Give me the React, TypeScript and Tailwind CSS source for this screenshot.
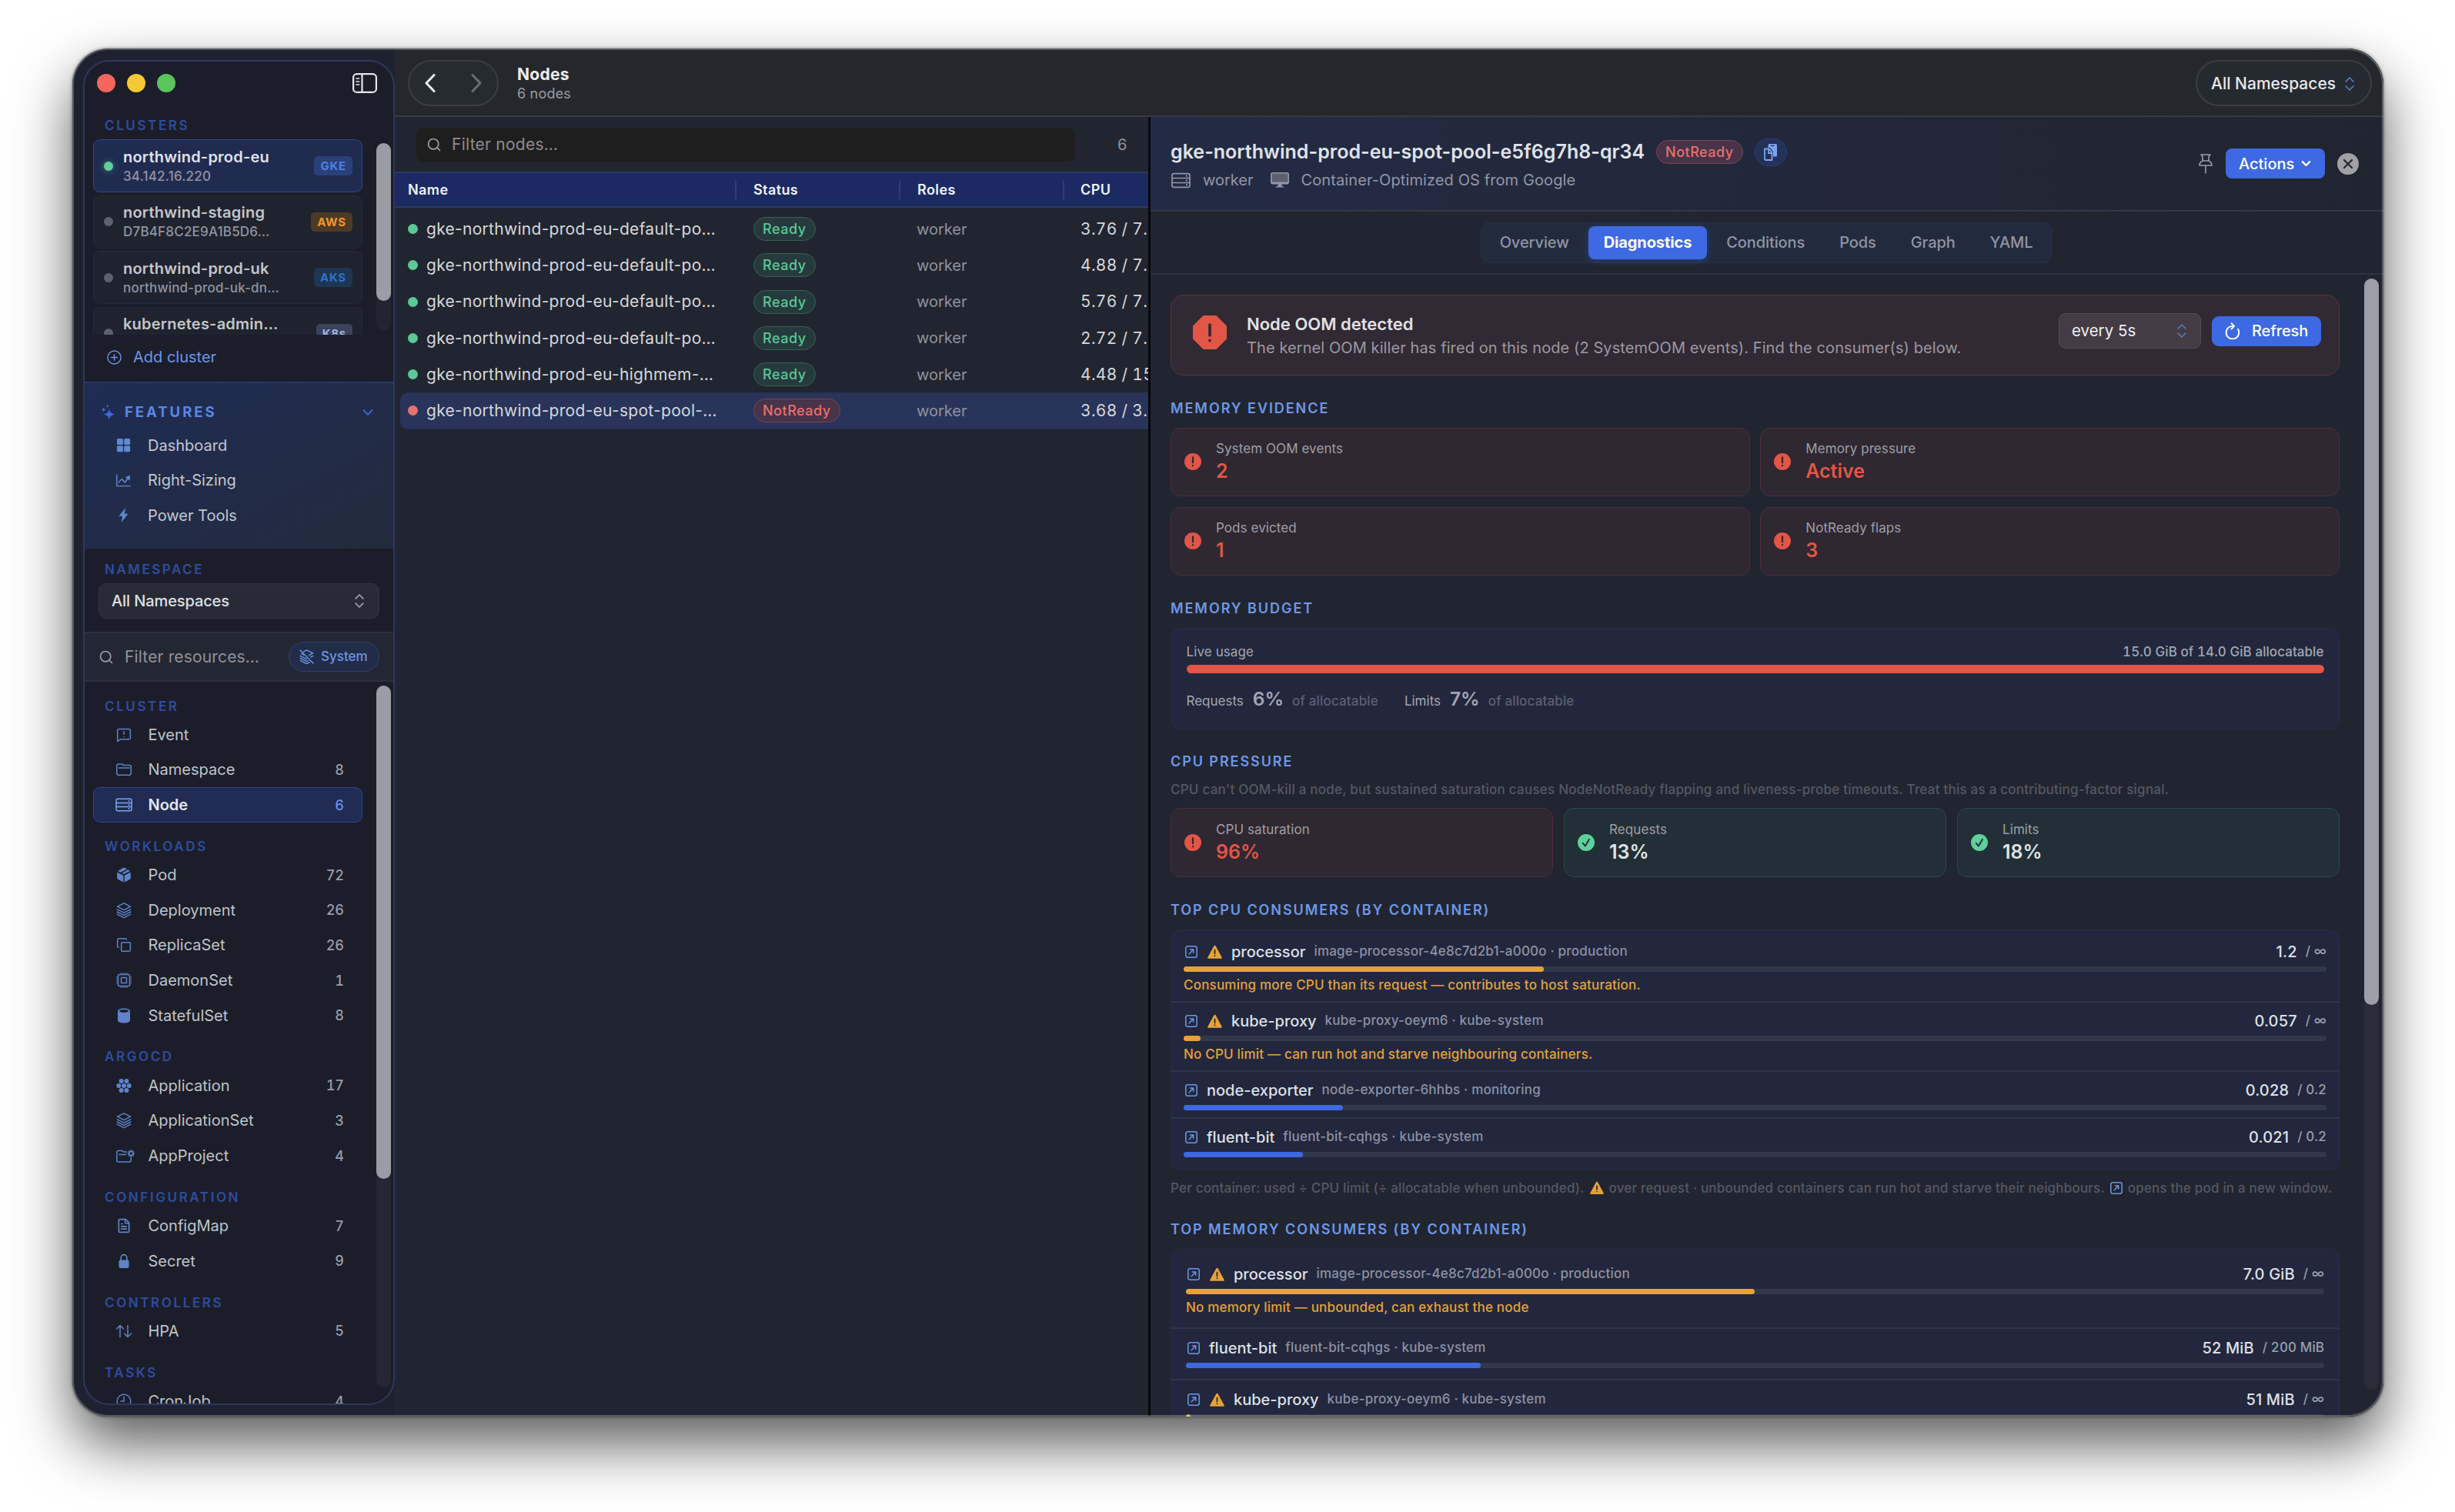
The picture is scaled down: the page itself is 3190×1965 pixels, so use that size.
import React from 'react';
import { ChevronDown, Copy, FileText, MessageSquareWarning, Search } from 'lucide-react';

type IconProps = { className?: string };

function Svg({ className = "", children }: { className?: string; children: React.ReactNode }) {
  return (
    <svg viewBox="0 0 20 20" className={`shrink-0 overflow-visible ${className}`} fill="none" stroke="currentColor" strokeWidth="1.5" strokeLinecap="round" strokeLinejoin="round">
      {children}
    </svg>
  );
}

const SidebarIcon = ({ className }: IconProps) => (
  <svg viewBox="0 0 32 26" className={className} fill="none" stroke="currentColor" strokeWidth="2.2" strokeLinecap="round">
    <rect x="1.1" y="1.1" width="29.8" height="23.8" rx="4.5" />
    <path d="M12.5 1.5v23" />
    <path d="M5 7h3.6M5 11h3.6M5 15h3.6" strokeWidth="1.6" />
  </svg>
);

const FolderIcon = ({ className }: IconProps) => (
  <Svg className={className}>
    <path d="M.8 5v10.2a2 2 0 0 0 2 2h14.4a2 2 0 0 0 2-2V6.600a2 2 0 0 0-2-2H9.500L7.800 3H2.800a2 2 0 0 0-2 2ZM3.500 8h13.500" />
  </Svg>
);

const ServerIcon = ({ className }: IconProps) => (
  <Svg className={className}>
    <rect x="0" y="2.300" width="20" height="15.400" rx="2" />
    <path d="M0 7.400h20M0 12.600h20" />
    <path d="M16.500 4.900h.01M16.500 10h.01M16.500 15.100h.01" strokeWidth="2" />
  </Svg>
);

const CubeIcon = ({ className }: IconProps) => (
  <Svg className={className}>
    <g fill="currentColor" stroke="none">
      <path d="M1.200 6.600 9.300 10.700v8.900L2.200 15.800a2 2 0 0 1-1-1.700ZM18.800 6.600 10.700 10.700v8.900l7.100-3.800a2 2 0 0 0 1-1.700Z" />
      <path d="M10.900.8 14 2.400 5.700 6.800 2 5.100 9.100.8a2 2 0 0 1 1.800 0ZM15.500 3.200 18 4.900l-8 4.200-2.700-1.400Z" />
    </g>
  </Svg>
);

const LayersIcon = ({ className }: IconProps) => (
  <Svg className={className}>
    <path d="M10 .8 18.500 5.200 10 9.600 1.500 5.200Z" />
    <path d="M1.200 8.800 10 13.200l8.800-4.400M1.200 12 10 16.400l8.800-4.400M1.200 15.200 10 19.600l8.800-4.400" strokeWidth="1.400" />
  </Svg>
);

const LayersOffIcon = ({ className }: IconProps) => (
  <Svg className={className}>
    <path d="M5.500 3.200 10 .8l8.500 4.400L13 8M1.200 8.800 10 13.200M15.500 10.500l3.300-1.700M1.200 12 10 16.400l2-1M1.200 15.200 10 19.600l4-2M3 6l3 1.600" />
    <path d="M1 1l18 18" />
  </Svg>
);

const CpuIcon = ({ className }: IconProps) => (
  <Svg className={className}>
    <rect x="2.500" y="2.500" width="15" height="15" rx="2" />
    <rect x="6.500" y="6.500" width="7" height="7" rx=".5" />
    <path d="M6 .5v2M8.700.5v2M11.300.5v2M14 .5v2M6 17.500v2M8.700 17.500v2M11.300 17.500v2M14 17.500v2M.5 6h2M.5 8.700h2M.5 11.300h2M.5 14h2M17.500 6h2M17.500 8.700h2M17.500 11.300h2M17.500 14h2" strokeWidth="1.100" />
  </Svg>
);

const CylinderIcon = ({ className }: IconProps) => (
  <Svg className={className}>
    <path d="M2 4C2 2 5.600.5 10 .5S18 2 18 4v12c0 2-3.600 3.500-8 3.500S2 18 2 16Z" fill="currentColor" stroke="none" />
    <ellipse cx="10" cy="3.900" rx="6" ry="1.900" fill="#1b1e29" stroke="none" />
  </Svg>
);

const HexDotsIcon = ({ className }: IconProps) => (
  <Svg className={className}>
    <g fill="currentColor" stroke="none">
      <circle cx="6.600" cy="3.900" r="3" />
      <circle cx="13.400" cy="3.900" r="3" />
      <circle cx="3.300" cy="10" r="3" />
      <circle cx="10" cy="10" r="3" />
      <circle cx="16.700" cy="10" r="3" />
      <circle cx="6.600" cy="16.100" r="3" />
      <circle cx="13.400" cy="16.100" r="3" />
    </g>
  </Svg>
);

const FolderGearIcon = ({ className }: IconProps) => (
  <Svg className={className}>
    <path d="M13.500 5H9.500L7.800 3.400H2.800a2 2 0 0 0-2 2V16a2 2 0 0 0 2 2h14.400a2 2 0 0 0 2-2v-3.500M3.800 8.400h9" />
    <circle cx="19.300" cy="7" r="2.700" strokeWidth="1.800" />
    <path d="M19.300 2.800v1M19.300 10.200v1M15.100 7h1M22.500 7h1M16.300 4l.7.700M21.600 9.300l.7.700M22.300 4l-.7.700M17 9.300l-.7.700" />
  </Svg>
);

const LockIcon = ({ className }: IconProps) => (
  <Svg className={className}>
    <rect x="3.500" y="8.500" width="13" height="10.500" rx="2" fill="currentColor" stroke="none" />
    <path d="M6.200 9V5.500a3.800 3.800 0 0 1 7.600 0V9" strokeWidth="1.700" />
  </Svg>
);

const ArrowsIcon = ({ className }: IconProps) => (
  <Svg className={className}>
    <path d="M5 17.500V2.500M.5 7 5 2.500 9.500 7M15 2.500v15M10.500 13l4.500 4.500L19.500 13" />
  </Svg>
);

const ClockIcon = ({ className }: IconProps) => (
  <Svg className={className}>
    <circle cx="10" cy="10" r="8.800" />
    <path d="M10 4.500V10H6" />
  </Svg>
);

const GridIcon = ({ className }: IconProps) => (
  <Svg className={className}>
    <g fill="currentColor" stroke="none">
      <rect x="1" y="1" width="8.400" height="8.400" rx="1.600" />
      <rect x="10.700" y="1" width="8.400" height="8.400" rx="1.600" />
      <rect x="1" y="10.700" width="8.400" height="8.400" rx="1.600" />
      <rect x="10.700" y="10.700" width="8.400" height="8.400" rx="1.600" />
    </g>
  </Svg>
);

const ChartIcon = ({ className }: IconProps) => (
  <Svg className={className}>
    <path d="M.8 2v15.500h18.500M3.500 12.500l4-4.500 4.500 4.500 4.500-6" />
    <path d="M13.500 5.500 18.500 3.500 18 9Z" fill="currentColor" strokeWidth="1" />
  </Svg>
);

const BoltIcon = ({ className }: IconProps) => (
  <Svg className={className}>
    <path d="M12.800 0 3.600 11.300h5L7 20l9.400-11.800h-5.200Z" fill="currentColor" stroke="none" />
  </Svg>
);

const SparklesIcon = ({ className }: IconProps) => (
  <svg viewBox="0 0 20 22" className={className} fill="currentColor">
    <path d="M11.500 5.500c.9 5 2.300 7 8 8-5.700 1-7.100 3-8 8-.9-5-2.300-7-8-8 5.700-1 7.100-3 8-8Z" />
    <path d="M3.800 3.500c.4 2.200 1.100 3.100 3.600 3.600C4.900 7.600 4.200 8.500 3.800 10.700 3.400 8.500 2.700 7.600.2 7.100c2.500-.5 3.200-1.400 3.600-3.600ZM9 0c.3 1.500.7 2 2.300 2.300C9.700 2.600 9.300 3.100 9 4.600 8.700 3.100 8.300 2.600 6.700 2.300 8.300 2 8.700 1.500 9 0Z" />
  </svg>
);

const UpDownIcon = ({ className }: IconProps) => (
  <svg viewBox="0 0 12 18" className={className} fill="none" stroke="currentColor" strokeWidth="1.700" strokeLinecap="round" strokeLinejoin="round">
    <path d="M1.200 5.800 6 1l4.800 4.800M1.200 12.200 6 17l4.800-4.800" />
  </svg>
);

const OpenIcon = ({ className }: IconProps) => (
  <Svg className={className}>
    <rect x="1" y="1" width="18" height="18" rx="3" strokeWidth="1.900" />
    <path d="M6.500 13.500l6.500-7M8 6.200h5.300v5.300" strokeWidth="1.900" />
  </Svg>
);

const WarnIcon = ({ className }: IconProps) => (
  <Svg className={className}>
    <path d="M10 2 18.500 17.500h-17Z" fill="#e6a236" stroke="#e6a236" strokeWidth="2.500" />
    <path d="M10 7v5M10 15h.01" stroke="#22273d" strokeWidth="1.900" />
  </Svg>
);

const AlertDot = () => (
  <svg viewBox="0 0 22 22" className="size-[22px] shrink-0">
    <circle cx="11" cy="11" r="11" fill="#e15646" />
    <path d="M11 5.300v6.900M11 16.200v.1" stroke="#2f2731" strokeWidth="2.200" strokeLinecap="round" />
  </svg>
);

const CheckDot = () => (
  <svg viewBox="0 0 22 22" className="size-[22px] shrink-0">
    <circle cx="11" cy="11" r="11" fill="#5fcf9b" />
    <path d="M6.800 11.800 9.800 15.500 15 6.800" fill="none" stroke="#222f37" strokeWidth="1.900" strokeLinecap="round" strokeLinejoin="round" />
  </svg>
);

const clusters = [
  { name: "northwind-prod-eu", sub: "34.142.16.220", tag: "GKE", tagStyle: "bg-[#2a4078] text-[#4f7fe6]", active: true },
  { name: "northwind-staging", sub: "D7B4F8C2E9A1B5D6…", tag: "AWS", tagStyle: "bg-[#4d3a26] text-[#f0972a]" },
  { name: "northwind-prod-uk", sub: "northwind-prod-uk-dn…", tag: "AKS", tagStyle: "bg-[#1f3553] text-[#2a74cf]" },
  { name: "kubernetes-admin…", sub: "", tag: "K8s", tagStyle: "bg-[#3a435c] text-[#9fb4e6]" },
];

const features = [
  { label: "Dashboard", icon: GridIcon },
  { label: "Right-Sizing", icon: ChartIcon },
  { label: "Power Tools", icon: BoltIcon },
];

const EventIcon = ({ className }: IconProps) => <MessageSquareWarning className={className} strokeWidth={1.800} />;
const CopiesIcon = ({ className }: IconProps) => <Copy className={className} strokeWidth={1.800} />;
const DocIcon = ({ className }: IconProps) => <FileText className={className} strokeWidth={2} />;

const groups = [
  {
    title: "CLUSTER",
    items: [
      { label: "Event", icon: EventIcon, count: "" },
      { label: "Namespace", icon: FolderIcon, count: "8" },
      { label: "Node", icon: ServerIcon, count: "6", active: true },
    ],
  },
  {
    title: "WORKLOADS",
    items: [
      { label: "Pod", icon: CubeIcon, count: "72" },
      { label: "Deployment", icon: LayersIcon, count: "26" },
      { label: "ReplicaSet", icon: CopiesIcon, count: "26" },
      { label: "DaemonSet", icon: CpuIcon, count: "1" },
      { label: "StatefulSet", icon: CylinderIcon, count: "8" },
    ],
  },
  {
    title: "ARGOCD",
    items: [
      { label: "Application", icon: HexDotsIcon, count: "17" },
      { label: "ApplicationSet", icon: LayersIcon, count: "3" },
      { label: "AppProject", icon: FolderGearIcon, count: "4" },
    ],
  },
  {
    title: "CONFIGURATION",
    items: [
      { label: "ConfigMap", icon: DocIcon, count: "7" },
      { label: "Secret", icon: LockIcon, count: "9" },
    ],
  },
  { title: "CONTROLLERS", items: [{ label: "HPA", icon: ArrowsIcon, count: "5" }] },
  { title: "TASKS", items: [{ label: "CronJob", icon: ClockIcon, count: "4" }] },
];

const nodes = [
  { name: "gke-northwind-prod-eu-default-po…", ready: true, cpu: "3.76 / 7.92" },
  { name: "gke-northwind-prod-eu-default-po…", ready: true, cpu: "4.88 / 7.92" },
  { name: "gke-northwind-prod-eu-default-po…", ready: true, cpu: "5.76 / 7.92" },
  { name: "gke-northwind-prod-eu-default-po…", ready: true, cpu: "2.72 / 7.92" },
  { name: "gke-northwind-prod-eu-highmem-…", ready: true, cpu: "4.48 / 15.89" },
  { name: "gke-northwind-prod-eu-spot-pool-…", ready: false, cpu: "3.68 / 3.92" },
];

type Consumer = { name: string; pod: string; used: string; limit: string; pct: number; warn?: boolean; note?: string };

const cpuConsumers: Consumer[] = [
  { name: "processor", pod: "image-processor-4e8c7d2b1-a000o · production", used: "1.2", limit: "/ ∞", pct: 31.5, warn: true, note: "Consuming more CPU than its request — contributes to host saturation." },
  { name: "kube-proxy", pod: "kube-proxy-oeym6 · kube-system", used: "0.057", limit: "/ ∞", pct: 1.45, warn: true, note: "No CPU limit — can run hot and starve neighbouring containers." },
  { name: "node-exporter", pod: "node-exporter-6hhbs · monitoring", used: "0.028", limit: "/ 0.2", pct: 13.95 },
  { name: "fluent-bit", pod: "fluent-bit-cqhgs · kube-system", used: "0.021", limit: "/ 0.2", pct: 10.45 },
];

const memConsumers: Consumer[] = [
  { name: "processor", pod: "image-processor-4e8c7d2b1-a000o · production", used: "7.0 GiB", limit: "/ ∞", pct: 49.95, warn: true, note: "No memory limit — unbounded, can exhaust the node" },
  { name: "fluent-bit", pod: "fluent-bit-cqhgs · kube-system", used: "52 MiB", limit: "/ 200 MiB", pct: 25.9 },
  { name: "kube-proxy", pod: "kube-proxy-oeym6 · kube-system", used: "51 MiB", limit: "/ ∞", pct: 0.4, warn: true },
];

export default function App() {
  return (
    <div className="h-[1965px] w-[3190px] overflow-hidden bg-white pl-[94px] pt-[63px] font-['Inter','Liberation_Sans',sans-serif] text-[#d5d7dc]">
      <div className="relative flex h-[1778px] w-[3003px] overflow-hidden rounded-[47px] bg-[#1e2230] shadow-[0_36px_76px_rgba(0,0,0,0.64),0_0_4px_rgba(0,0,0,0.5)]">
        <Sidebar />
        <main className="flex min-w-0 flex-1 flex-col bg-[#212530]">
          <TitleBar />
          <div className="flex min-h-0 flex-1">
            <NodeTable />
            <div className="w-[3px] bg-[#07080b]" />
            <Detail />
          </div>
        </main>
        {/* Window edge highlight */}
        <div className="pointer-events-none absolute inset-0 rounded-[47px] border-2 border-white/25" />
      </div>
    </div>
  );
}

function Sidebar() {
  return (
    <aside className="mb-[15px] ml-[14px] mt-[15px] flex w-[405px] shrink-0 flex-col overflow-hidden rounded-[34px] border-2 border-[#2d3860] bg-[#1b1e29]">
      <div className="flex h-[56px] shrink-0 items-center pl-[16px] pr-[21px]">
        <div className="flex gap-[15px]">
          <span className="size-[24px] rounded-full bg-[#f4655d]" />
          <span className="size-[24px] rounded-full bg-[#f6c934]" />
          <span className="size-[24px] rounded-full bg-[#59c55c]" />
        </div>
        <SidebarIcon className="ml-auto h-[26px] w-[32px] text-[#e4e5e8]" />
      </div>
      <div className="h-[45px] shrink-0 pl-[26px] pt-[17px] text-[17px] font-semibold leading-[20px] tracking-[2.600px] text-[#2f4c9f]">CLUSTERS</div>
      <div className="flex h-[254px] shrink-0 justify-between overflow-hidden pl-[11px] pr-[3px]">
        <div className="flex w-[350px] flex-col gap-[3.500px]">
          {clusters.map((c) => (
            <div key={c.name} className={`flex h-[69px] shrink-0 items-center rounded-[9px] border pl-[13px] pr-[12px] ${c.active ? "border-[#2c458c] bg-[#202b50]" : "border-[#262a36] bg-[#1f232e]"}`}>
              <span className={`size-[12px] rounded-full ${c.active ? "bg-[#5fcf9b] shadow-[0_0_8px_rgba(95,207,155,0.500)]" : "bg-[#5d616c]"}`} />
              <div className="ml-[13px] flex h-[52px] flex-col whitespace-nowrap pt-[2px]">
                <span className={`text-[20px] font-semibold leading-[25px] tracking-[0.230px] ${c.active ? "text-[#dfe2ea]" : "text-[#c3c5ca]"}`}>{c.name}</span>
                <span className="text-[17px] font-medium leading-[25px] tracking-[0.200px] text-[#9095a3]">{c.sub}</span>
              </div>
              <span className={`ml-auto rounded-[5px] px-[8px] text-[15px] font-bold leading-[25px] tracking-[0.800px] ${c.tagStyle}`}>{c.tag}</span>
            </div>
          ))}
        </div>
        <div className="mt-[5px] h-[243px] w-[19px] rounded-full bg-[#22252f]">
          <div className="h-[205px] rounded-full bg-[#9a9da3]" />
        </div>
      </div>
      <div className="flex h-[61px] shrink-0 items-center pb-[3px] pl-[29px] text-[#6d96e6]">
        <Svg className="size-[19px]">
          <circle cx="10" cy="10" r="9" />
          <path d="M10 6v8M6 10h8" />
        </Svg>
        <span className="ml-[15px] text-[20px]">Add cluster</span>
      </div>

      <div className="h-[217px] shrink-0 border-t-2 border-[#2a3a68] bg-linear-to-br from-[#1f2c54] to-[#222b3c] pt-[15px]">
        <div className="flex h-[43px] items-center pl-[21px] pr-[22px] pt-[2px]">
          <SparklesIcon className="h-[22px] w-[19px] text-[#3c69e0]" />
          <span className="ml-[12px] text-[18.500px] font-bold tracking-[3px] text-[#5a86e6]">FEATURES</span>
          <ChevronDown className="ml-auto size-[22px] text-[#3a62cf]" strokeWidth={2.500} />
        </div>
        {features.map(({ label, icon: Icon }) => (
          <div key={label} className="flex h-[45.600px] items-center pl-[41px]">
            <Icon className="size-[19px] text-[#6288cf]" />
            <span className="ml-[22px] text-[20px] text-[#c2c6d0]">{label}</span>
          </div>
        ))}
      </div>

      <div className="h-[108px] shrink-0 px-[18px] pt-[17px]">
        <div className="pl-[8px] text-[17px] font-semibold leading-[20px] tracking-[2.500px] text-[#2f4c9f]">NAMESPACE</div>
        <div className="mt-[8px] flex h-[46px] items-center rounded-[10px] border border-[#2c3247] bg-[#282b37] pl-[16px] pr-[19px]">
          <span className="text-[20px] font-medium tracking-[-0.100px] text-[#dfe0e4]">All Namespaces</span>
          <UpDownIcon className="ml-auto h-[18px] w-[12px] text-[#a2a5ad]" />
        </div>
      </div>

      <div className="flex h-[65px] shrink-0 items-center border-y-2 border-[#2c303d] bg-[#232732] pl-[18px] pr-[18px]">
        <Search className="size-[20px] text-[#9a9da5]" />
        <span className="ml-[14px] text-[21px] tracking-[0.150px] text-[#8f929b]">Filter resources…</span>
        <span className="ml-auto flex h-[39px] w-[118px] items-center rounded-full border border-[#2b4274] bg-[#212c48] pl-[13px] text-[#6d96e6]">
          <LayersOffIcon className="size-[19px]" />
          <span className="ml-[9px] text-[17px] font-medium">System</span>
        </span>
      </div>

      <div className="flex min-h-0 flex-1 justify-between overflow-hidden pl-[11px] pr-[3px]">
        <div className="w-[350px] pt-[0.500px]">
          {groups.map((g) => (
            <div key={g.title}>
              <div className="h-[45.600px] pl-[15px] pt-[21px] text-[17px] font-semibold leading-[20px] tracking-[2.600px] text-[#2f4c9f]">{g.title}</div>
              {g.items.map((item) => (
                <ResourceRow key={item.label} {...item} />
              ))}
            </div>
          ))}
        </div>
        <div className="mt-[5px] h-[912px] w-[19px] rounded-full bg-[#252833]">
          <div className="h-[641px] rounded-full bg-[#9a9da3]" />
        </div>
      </div>
    </aside>
  );
}

function ResourceRow({ label, icon: Icon, count, active }: { label: string; icon: (p: IconProps) => React.ReactNode; count: string; active?: boolean }) {
  return (
    <div className={`flex h-[45.600px] items-center rounded-[9px] border pl-[28.500px] pr-[23px] ${active ? "border-[#2c458c] bg-[#202c54]" : "border-transparent"}`}>
      <Icon className={`size-[20px] shrink-0 ${active ? "text-[#7ba3ee]" : "text-[#5f83c9]"}`} />
      <span className={`ml-[22px] text-[20px] ${active ? "font-semibold text-[#e4e7ee]" : "text-[#c0c3ca]"}`}>{label}</span>
      <span className={`ml-auto text-[18px] font-medium tabular-nums ${active ? "text-[#6a90e4]" : "text-[#9a9da6]"}`}>{count}</span>
    </div>
  );
}

function TitleBar() {
  return (
    <header className="flex h-[89px] shrink-0 items-start border-b-2 border-[#363a41] bg-[#24282d] pl-[17px] pr-[15px] pt-[15px]">
      <div className="flex h-[60px] w-[118px] items-center rounded-full border-2 border-[#3a3e44] bg-[#262a31] pl-[20px]">
        <svg viewBox="0 0 76 24" className="h-[24px] w-[76px]" fill="none" strokeWidth="3" strokeLinecap="round" strokeLinejoin="round">
          <path d="M12 1.500 2 12l10 10.500" stroke="#eceded" />
          <path d="M62 1.500 72 12 62 22.500" stroke="#6b6e73" />
        </svg>
      </div>
      <div className="ml-[24px] flex flex-col pt-[6px]">
        <span className="text-[21px] font-bold leading-[26px] tracking-[0.300px] text-[#eceded]">Nodes</span>
        <span className="text-[18px] leading-[24px] tracking-[0.200px] text-[#9a9c9f]">6 nodes</span>
      </div>
      <div className="ml-auto flex h-[60px] w-[229px] items-center rounded-full border-2 border-[#3a3e44] bg-[#252a31] pl-[18px] pr-[21px] pt-[2px]">
        <span className="text-[21px] font-medium text-[#e6e7e9]">All Namespaces</span>
        <UpDownIcon className="ml-auto h-[18px] w-[12px] text-[#5877b8]" />
      </div>
    </header>
  );
}

function NodeTable() {
  return (
    <section className="flex w-[979px] shrink-0 flex-col overflow-hidden">
      <div className="flex h-[71px] shrink-0 items-center pl-[28px]">
        <div className="flex h-[44px] w-[856px] items-center rounded-[9px] bg-[#1e1e1e] pl-[13px]">
          <Search className="size-[20px] text-[#a0a0a0]" />
          <span className="ml-[13px] text-[21px] tracking-[0.250px] text-[#8d8d8f]">Filter nodes…</span>
        </div>
        <span className="ml-[55px] text-[20px] text-[#8f929a]">6</span>
      </div>
      <div className="flex h-[47px] shrink-0 items-center border-y-2 border-[#2f3a5e] bg-[#1b2a62] pl-[17px] text-[18px] font-semibold tracking-[0.400px] text-[#f0f2f6]">
        <span className="h-[24px] w-[427px] border-r-2 border-[#2f3e74] leading-[24px]">Name</span>
        <span className="h-[24px] w-[213px] border-r-2 border-[#2f3e74] pl-[22px] leading-[24px]">Status</span>
        <span className="h-[24px] w-[213px] border-r-2 border-[#2f3e74] pl-[22px] leading-[24px]">Roles</span>
        <span className="pl-[21px] leading-[24px]">CPU</span>
      </div>
      <div className="pl-[7px] pt-[4px]">
        {nodes.map((n, i) => (
          <div key={i} className={`flex h-[47.250px] items-center whitespace-nowrap rounded-l-[10px] pl-[10px] text-[21px] tracking-[0.290px] ${n.ready ? "" : "bg-[#283459]"}`}>
            <span className={`size-[13px] shrink-0 rounded-full ${n.ready ? "bg-[#5cc896]" : "bg-[#e57370]"}`} />
            <span className="ml-[11px] w-[425px] shrink-0">{n.name}</span>
            <span className="flex w-[212px] shrink-0">
              <StatusPill ready={n.ready} />
            </span>
            <span className="w-[213px] shrink-0 text-[20px] tracking-normal text-[#8f939e]">worker</span>
            <span className="tabular-nums">{n.cpu}</span>
          </div>
        ))}
      </div>
    </section>
  );
}

function StatusPill({ ready }: { ready: boolean }) {
  return (
    <span className={`inline-flex h-[31px] items-center rounded-full border px-[11px] align-middle text-[18px] font-medium tracking-[0.500px] ${ready ? "border-[#33624f] bg-[#263a3d] text-[#5cc896]" : "border-[#7d454f] bg-[#47334a] text-[#e8716b]"}`}>
      {ready ? "Ready" : "NotReady"}
    </span>
  );
}

const tabs = ["Overview", "Diagnostics", "Conditions", "Pods", "Graph", "YAML"];

function Detail() {
  return (
    <section className="flex min-w-0 flex-1 flex-col overflow-hidden">
      <div className="flex h-[123px] shrink-0 items-center border-b-2 border-[#333846] bg-linear-to-r from-[#232b44] via-[#22283b] to-[#21252f] pl-[26px] pr-[32px]">
        <div className="flex flex-col pt-[5px]">
          <div className="flex h-[38px] items-center">
            <h1 className="text-[25px] font-semibold tracking-[0.020px] text-[#dfe2e8]">gke-northwind-prod-eu-spot-pool-e5f6g7h8-qr34</h1>
            <span className="ml-[15px] flex">
              <StatusPill ready={false} />
            </span>
            <span className="ml-[15px] flex h-[36px] w-[42px] items-center justify-center rounded-full border border-[#27407c] bg-[#243158]">
              <svg viewBox="0 0 18 22" className="h-[22px] w-[18px]" fill="none" stroke="#7ba3ee" strokeWidth="1.800">
                <path d="M5.500 1.500A1.500 1.500 0 0 1 7 0h8.500A1.500 1.500 0 0 1 17 1.500v13.500a1.500 1.500 0 0 1-1.500 1.500H12V10L8 5H5.500Z" fill="#7ba3ee" stroke="none" />
                <path d="M1 6.500h5.500L10.500 11v10h-8A1.500 1.500 0 0 1 1 19.500ZM6 6.500V12h5" />
                <path d="M9 2.300h4.500" stroke="#243158" strokeWidth="1.300" />
              </svg>
            </span>
          </div>
          <div className="flex h-[35px] items-center text-[20px] text-[#9297a5]">
            <ServerIcon className="ml-[2px] size-[23px]" />
            <span className="ml-[17px]">worker</span>
            <svg viewBox="0 0 24 20" className="ml-[22px] h-[20px] w-[24px]">
              <rect x=".8" y=".8" width="22.400" height="14" rx="2" fill="#5c6071" stroke="#9297a5" strokeWidth="1.600" />
              <path d="M1 12.500h22v2H1ZM9.500 15h5v3H17v1.500H7V18h2.500Z" fill="#9297a5" />
            </svg>
            <span className="ml-[16px] tracking-[0.100px]">Container-Optimized OS from Google</span>
          </div>
        </div>
        <div className="ml-auto flex items-center">
          <svg viewBox="0 0 18 26" className="h-[26px] w-[18px]" fill="none" stroke="#9a9ea8" strokeWidth="1.600" strokeLinejoin="round" strokeLinecap="round">
            <path d="M3 1h12l-2 2.500v5.500c2.500 1.200 4 3 4 6H1c0-3 1.500-4.800 4-6V3.500ZM5 9h8M9 15v10" />
          </svg>
          <span className="ml-[17px] flex h-[39px] w-[129px] items-center rounded-[8px] bg-[#3d69e2] pl-[17px] text-[20px] font-medium text-white">
            Actions
            <ChevronDown className="ml-[6px] size-[19px]" strokeWidth={2.800} />
          </span>
          <svg viewBox="0 0 28 28" className="ml-[16px] size-[28px]">
            <circle cx="14" cy="14" r="14" fill="#9fa1a7" />
            <path d="M9 9l10 10M19 9 9 19" stroke="#22262f" strokeWidth="2.200" strokeLinecap="round" />
          </svg>
        </div>
      </div>

      <div className="flex h-[82px] shrink-0 items-center justify-center border-b-2 border-[#2f333e] pr-[2px]">
        <div className="flex h-[53px] items-center gap-[5px] rounded-[11px] border border-[#243150] bg-[#222b3e] px-[4px] text-[20px] font-medium tracking-[-0.100px] text-[#9095a1]">
          {tabs.map((t) => (
            <span key={t} className={`flex h-[43px] items-center rounded-[8px] px-[20px] ${t === "Diagnostics" ? "bg-[#3d69e2] font-bold text-white shadow-[0_2px_10px_rgba(61,105,226,0.350)]" : ""}`}>
              {t}
            </span>
          ))}
        </div>
      </div>

      <div className="flex min-h-0 flex-1 overflow-hidden pl-[26px] pr-[6px]">
        <div className="w-[1519px]">
          <OomBanner />

          <SectionTitle className="mt-[33px]">MEMORY EVIDENCE</SectionTitle>
          <div className="mt-[14.500px] grid grid-cols-2 gap-[13.500px]">
            <Metric label="System OOM events" value="2" />
            <Metric label="Memory pressure" value="Active" />
            <Metric label="Pods evicted" value="1" />
            <Metric label="NotReady flaps" value="3" />
          </div>

          <SectionTitle className="mt-[32.500px]">MEMORY BUDGET</SectionTitle>
          <div className="mt-[15px] h-[132px] rounded-[13px] border border-[#262d48] bg-[#22273d] px-[19.500px] pt-[18px]">
            <div className="flex justify-between text-[17px] leading-[24px] tracking-[0.100px] text-[#a3a6b2]">
              <span>Live usage</span>
              <span className="font-medium tabular-nums tracking-[0.060px]">15.0 GiB of 14.0 GiB allocatable</span>
            </div>
            <div className="mt-[5px] h-[11px] rounded-full bg-[#e15646]" />
            <div className="mt-[18px] flex items-center leading-[30px]">
              <Share label="Requests" value="6%" />
              <Share label="Limits" value="7%" />
            </div>
          </div>

          <SectionTitle className="mt-[32px]">CPU PRESSURE</SectionTitle>
          <p className="mt-[15px] whitespace-nowrap text-[17px] font-medium leading-[22px] tracking-[0.235px] text-[#555964]">
            CPU can't OOM-kill a node, but sustained saturation causes NodeNotReady flapping and liveness-probe timeouts. Treat this as a contributing-factor signal.
          </p>
          <div className="mt-[13.500px] grid grid-cols-3 gap-[14px]">
            <Metric label="CPU saturation" value="96%" />
            <Metric label="Requests" value="13%" ok />
            <Metric label="Limits" value="18%" ok />
          </div>

          <SectionTitle className="mt-[33.500px]">TOP CPU CONSUMERS (BY CONTAINER)</SectionTitle>
          <div className="mt-[15px] rounded-[13px] border border-[#262d48] bg-[#22273d] py-[4px]">
            {cpuConsumers.map((c) => (
              <ConsumerRow key={c.name} {...c} />
            ))}
          </div>
          <p className="mt-[12px] flex items-center whitespace-nowrap text-[17px] font-medium leading-[22px] tracking-[0.185px] text-[#555964]">
            Per container: used ÷ CPU limit (÷ allocatable when unbounded).
            <WarnIcon className="mx-[7px] size-[18px]" />
            over request · unbounded containers can run hot and starve their neighbours.
            <OpenIcon className="mx-[7px] size-[16px] text-[#6d96e6]" />
            opens the pod in a new window.
          </p>

          <SectionTitle className="mt-[33px]">TOP MEMORY CONSUMERS (BY CONTAINER)</SectionTitle>
          <div className="mt-[15px] rounded-[13px] border border-[#262d48] bg-[#22273d] pt-[7px]">
            {memConsumers.map((c) => (
              <ConsumerRow key={c.name} roomy {...c} />
            ))}
          </div>
        </div>
        <div className="ml-auto mt-[5px] h-[1444px] w-[19px] rounded-full bg-[#2a2d38]">
          <div className="h-[944px] rounded-full bg-[#9c9ea8]" />
        </div>
      </div>
    </section>
  );
}

function OomBanner() {
  return (
    <div className="mt-[26px] flex h-[105px] rounded-[17px] border border-[#5b333d] bg-[#312933] pl-[28px] pr-[23px] pt-[23px]">
      <svg viewBox="0 0 44 44" className="mt-[3px] size-[44px] shrink-0">
        <path d="M14 1h16l13 13v16L30 43H14L1 30V14Z" fill="#e15646" stroke="#e15646" strokeWidth="2" strokeLinejoin="round" />
        <path d="M22 12v14M22 32.500v.1" stroke="#312933" strokeWidth="3.600" strokeLinecap="round" />
      </svg>
      <div className="ml-[26px] whitespace-nowrap">
        <div className="text-[22px] font-semibold leading-[28px] text-[#e2e1e5]">Node OOM detected</div>
        <div className="text-[20px] leading-[34px] tracking-[0.090px] text-[#9d99a1]">The kernel OOM killer has fired on this node (2 SystemOOM events). Find the consumer(s) below.</div>
      </div>
      <div className="ml-auto flex h-[46px] items-center">
        <span className="flex h-[46px] w-[185px] items-center rounded-[9px] border border-[#554c56] bg-[#443b45] pl-[16px] pr-[18px] text-[20.500px] text-[#f0f0f2]">
          every 5s
          <UpDownIcon className="ml-auto h-[18px] w-[12px] text-[#5877b8]" />
        </span>
        <span className="ml-[14px] flex h-[39px] w-[142px] items-center rounded-[9px] bg-[#3d69e2] pl-[17px] text-[20px] font-medium text-white">
          <svg viewBox="0 0 20 22" className="h-[22px] w-[20px]" fill="none" stroke="currentColor" strokeWidth="1.900" strokeLinecap="round" strokeLinejoin="round">
            <path d="M17 8.800A8.300 8.300 0 1 1 11.500 5M8.500 1.200l3.600 3.700L8.500 8.500" />
          </svg>
          <span className="ml-[15px] tracking-[-0.100px]">Refresh</span>
        </span>
      </div>
    </div>
  );
}

function SectionTitle({ className, children }: { className: string; children: React.ReactNode }) {
  return <h2 className={`whitespace-nowrap text-[18px] font-semibold leading-[20px] tracking-[1.930px] text-[#6f98e8] ${className}`}>{children}</h2>;
}

function Metric({ label, value, ok }: { label: string; value: string; ok?: boolean }) {
  return (
    <div className={`flex h-[89.500px] items-center rounded-[13px] border pl-[17px] ${ok ? "border-[#2b4a4a] bg-[#222f37]" : "border-[#4b2f3b] bg-[#2f2731]"}`}>
      {ok ? <CheckDot /> : <AlertDot />}
      <div className="ml-[19px] pb-[2px]">
        <div className="text-[17px] leading-[26px] tracking-[0.080px] text-[#a09fa6]">{label}</div>
        <div className={`text-[25px] font-semibold leading-[32px] ${ok ? "text-[#dfe3e6]" : "text-[#e15646]"}`}>{value}</div>
      </div>
    </div>
  );
}

function Share({ label, value }: { label: string; value: string }) {
  return (
    <div className="mr-[34px] flex items-baseline">
      <span className="text-[17px] text-[#a3a6b2]">{label}</span>
      <span className="ml-[12px] text-[24.500px] font-semibold text-[#a3a6b2]">{value}</span>
      <span className="ml-[11px] text-[17px] font-medium tracking-[0.150px] text-[#5b6073]">of allocatable</span>
    </div>
  );
}

function ConsumerRow({ name, pod, used, limit, pct, warn, note, roomy }: Consumer & { roomy?: boolean }) {
  return (
    <div className={`whitespace-nowrap border-b-2 border-[#2f3549] last:border-b-0 ${roomy ? "px-[19px] pb-[14px] pt-[12px]" : "px-[16px] pb-[9px] pt-[11px] last:pb-[12px]"}`}>
      <div className="flex h-[26px] items-center">
        <OpenIcon className="ml-[2px] size-[16px] text-[#6d96e6]" />
        {warn && <WarnIcon className="ml-[13px] size-[19px]" />}
        <span className="ml-[12px] text-[20px] font-medium text-[#dde0e8]">{name}</span>
        <span className="ml-[11px] text-[17px] font-medium tracking-[0.210px] text-[#8d92a2]">{pod}</span>
        <span className="ml-auto text-[20px] font-medium tracking-[0.150px] text-[#dde0e8]">{used}</span>
        <span className="ml-[11px] text-[17px] font-medium tabular-nums tracking-[0.080px] text-[#9a9eac]">{limit}</span>
      </div>
      <div className="mt-[6px] h-[7px] rounded-full bg-[#31384a]">
        <div className={`h-full rounded-full ${warn ? "bg-[#e6a236]" : "bg-[#3d69e2]"}`} style={{ width: `${pct}%` }} />
      </div>
      {note && <div className="mt-[6px] text-[17px] font-medium leading-[23px] tracking-[0.200px] text-[#e6a236]">{note}</div>}
    </div>
  );
}
